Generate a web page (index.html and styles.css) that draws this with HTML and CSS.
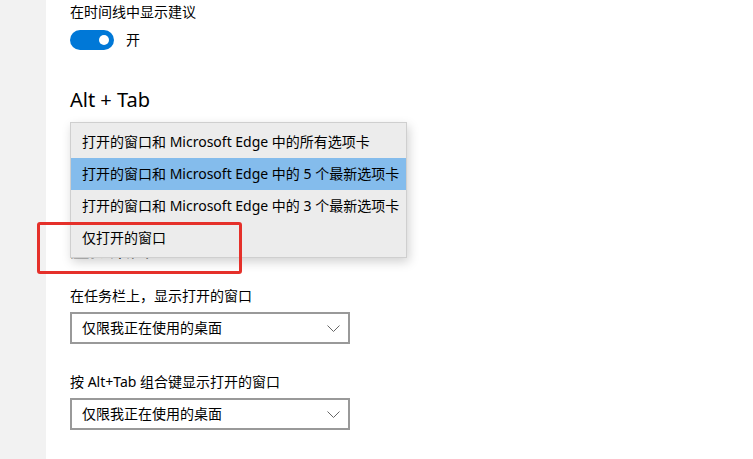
FILE: index.html
```html
<!DOCTYPE html>
<html lang="zh-CN">
<head>
    <meta charset="UTF-8">
    <meta name="viewport" content="width=device-width, initial-scale=1.0">
    <title>多任务处理</title>
    <link rel="stylesheet" href="styles.css">
</head>
<body>
    <div class="page">
        <!-- barra lateral -->
        <div class="sidebar"></div>

        <div class="content">
            <p class="setting-label">在时间线中显示建议</p>
            <div class="toggle-row">
                <span class="toggle"><span class="knob"></span></span>
                <span class="toggle-text">开</span>
            </div>

            <h2 class="section-title">Alt + Tab</h2>
            <div class="select hidden-select">
                <span>打开的窗口和 Microsoft Edge 中的 5 个最新选项卡</span>
            </div>

            <h2 class="section-title desktops">虚拟桌面</h2>

            <p class="setting-label first">在任务栏上，显示打开的窗口</p>
            <div class="select">
                <span>仅限我正在使用的桌面</span>
                <svg class="chevron" width="13" height="7" viewBox="0 0 13 7"><polyline points="0.5,0.5 6.5,6.5 12.5,0.5" fill="none" stroke="#666" stroke-width="1"/></svg>
            </div>

            <p class="setting-label second">按 Alt+Tab 组合键显示打开的窗口</p>
            <div class="select">
                <span>仅限我正在使用的桌面</span>
                <svg class="chevron" width="13" height="7" viewBox="0 0 13 7"><polyline points="0.5,0.5 6.5,6.5 12.5,0.5" fill="none" stroke="#666" stroke-width="1"/></svg>
            </div>
        </div>

        <!-- lista desplegable abierta -->
        <ul class="popup">
            <li class="item">打开的窗口和 Microsoft Edge 中的所有选项卡</li>
            <li class="item selected">打开的窗口和 Microsoft Edge 中的 5 个最新选项卡</li>
            <li class="item">打开的窗口和 Microsoft Edge 中的 3 个最新选项卡</li>
            <li class="item">仅打开的窗口</li>
        </ul>

        <!-- marco rojo -->
        <div class="mark"></div>
    </div>
</body>
</html>
```

FILE: styles.css
```css
body {
    margin: 0;
    padding: 0;
    background-color: #fff;
    color: #000;
    font-family: "Noto Sans", "Noto Sans CJK SC", sans-serif;
    font-size: 14px;
    line-height: 20px;
}
.page {
    position: relative;
    display: flex;
    min-height: 100vh;
    overflow: hidden;
}
.sidebar {
    width: 46px;
    flex-shrink: 0;
    background-color: #f2f2f2;
}
.content {
    padding-left: 24px;
    display: flex;
    flex-direction: column;
    align-items: flex-start;
}
.setting-label {
    margin: 2px 0 0;
}
.setting-label.first {
    margin-top: 22px;
}
.setting-label.second {
    margin-top: 28px;
}
.toggle-row {
    display: flex;
    align-items: center;
    margin-top: 8px;
    height: 20px;
}
.toggle {
    width: 44px;
    height: 20px;
    border-radius: 10px;
    background-color: #0078d7;
    display: flex;
    align-items: center;
    justify-content: flex-end;
    padding-right: 5px;
    box-sizing: border-box;
}
.knob {
    width: 10px;
    height: 10px;
    border-radius: 50%;
    background-color: #fff;
}
.toggle-text {
    margin-left: 12px;
}
.section-title {
    margin: 36px 0 0;
    font-size: 20px;
    line-height: 28px;
    font-weight: normal;
}
.section-title.desktops {
    margin-top: 46px;
}
.select {
    width: 280px;
    height: 32px;
    margin-top: 6px;
    box-sizing: border-box;
    border: 2px solid #999;
    padding: 0 8px 0 10px;
    display: flex;
    align-items: center;
    justify-content: space-between;
    white-space: nowrap;
}
/* queda debajo de la lista abierta */
.hidden-select {
    width: 337px;
    margin-top: 44px;
    padding-right: 2px;
}
.chevron {
    flex-shrink: 0;
}
.popup {
    position: absolute;
    left: 70px;
    top: 122px;
    width: 337px;
    margin: 0;
    padding: 3px 0;
    list-style: none;
    box-sizing: border-box;
    background-color: #ececec;
    border: 1px solid #cfcfcf;
    box-shadow: 2px 4px 10px rgba(0, 0, 0, 0.18);
}
.item {
    height: 32px;
    line-height: 32px;
    padding-left: 11px;
    white-space: nowrap;
}
.item.selected {
    background-color: #84bcec;
}
.mark {
    position: absolute;
    left: 37px;
    top: 222px;
    width: 205px;
    height: 52px;
    box-sizing: border-box;
    border: 3px solid #e5302a;
    border-radius: 3px;
}
```
